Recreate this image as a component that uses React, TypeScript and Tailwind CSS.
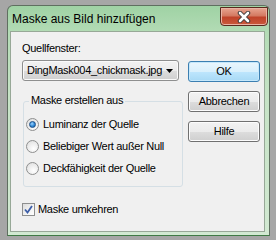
const font = { fontFamily: '"Liberation Sans", Arial, sans-serif' };

const Btn = ({ label, primary }: { label: string; primary?: boolean }) => (
  <div
    className={`h-[21px] w-[72px] rounded-[3px] border flex items-center justify-center text-[11px] text-black ${
      primary
        ? "border-[#3c7fb1] bg-[linear-gradient(#eaf6fd_0%,#d9f0fc_50%,#bee6fd_51%,#a7d9f5_100%)] shadow-[inset_0_0_0_1px_#c6e8fb]"
        : "border-[#707070] bg-[linear-gradient(#f2f2f2_0%,#ebebeb_50%,#dddddd_51%,#cfcfcf_100%)] shadow-[inset_0_0_0_1px_#fcfcfc]"
    }`}
  >
    {label}
  </div>
);

const Radio = ({ label, checked }: { label: string; checked?: boolean }) => (
  <div className="flex h-[22px] items-center">
    <div className="flex size-[13px] items-center justify-center rounded-full border border-[#8e8f8f] bg-[radial-gradient(circle_at_60%_70%,#ffffff_0%,#e6e6e6_70%,#cfcfcf_100%)]">
      {checked && (
        <div className="size-[7px] rounded-full border border-[#1b4e86] bg-[radial-gradient(circle_at_40%_35%,#9fd4ff_0%,#2e88d6_55%,#1a5ea3_100%)]" />
      )}
    </div>
    <span className="ml-[4px]">{label}</span>
  </div>
);

export default function App() {
  return (
    <div
      className="h-[240px] w-[276px] overflow-hidden bg-[#a6a6a6] pl-[7px] pt-[5px]"
      style={font}
    >
      <div className="flex h-[231px] w-[263px] flex-col rounded-t-[6px] border border-[#5f6f60] border-b-[#3f7a45] bg-[linear-gradient(#9fd2a4_0%,#b4dcb6_12%,#c6e3c6_40%,#d2e9d2_100%)] pb-[3px] pl-[2px] pr-[4px]">
        {/* Title bar */}
        <div className="flex h-[25px] items-start justify-between">
          <span className="mt-[6px] pl-[2px] text-[12px] leading-[14px] text-black">
            Maske aus Bild hinzufügen
          </span>
          <div className="-mr-[3px] mt-[1px] flex h-[19px] w-[48px] items-center justify-center rounded-b-[4px] border border-[#5a2a1f] bg-[linear-gradient(#e8a591_0%,#d47a62_45%,#c0432a_55%,#c95a3c_100%)] shadow-[inset_0_0_0_1px_#eab3a4]">
            <svg width="14" height="12" viewBox="0 0 14 12">
              <path d="M3 2 L11 10 M11 2 L3 10" stroke="#3a3a3a" strokeWidth="4.5" strokeLinecap="round" />
              <path d="M3 2 L11 10 M11 2 L3 10" stroke="#ffffff" strokeWidth="2.6" strokeLinecap="round" />
            </svg>
          </div>
        </div>

        {/* Client area */}
        <div className="flex flex-1 border border-[#97a897] bg-[#f0f0f0] pl-[11px] pt-[10px] text-[11px] tracking-[-0.3px] text-black">
          <div className="flex w-[161px] shrink-0 flex-col">
            <span className="leading-[13px]">Quellfenster:</span>
            <div className="mt-[5px] flex h-[21px] w-[157px] items-center justify-between rounded-[3px] border border-[#8e8f8f] bg-[linear-gradient(#f2f2f2_0%,#ebebeb_50%,#dddddd_51%,#cfcfcf_100%)] pl-[4px] pr-[5px] shadow-[inset_0_0_0_1px_#fafafa]">
              <span className="whitespace-nowrap">DingMask004_chickmask.jpg</span>
              <svg width="7" height="4" viewBox="0 0 7 4" className="shrink-0">
                <path d="M0 0 H7 L3.5 4 Z" fill="#000" />
              </svg>
            </div>

            <div className="relative ml-[1px] mt-[20px] h-[86px] w-[160px] rounded-[3px] border border-[#d5dfe5] pl-[2px] pt-[11px]">
              <span className="absolute -top-[8px] left-[5px] bg-[#f0f0f0] px-[2px] leading-[13px]">
                Maske erstellen aus
              </span>
              <Radio label="Luminanz der Quelle" checked />
              <Radio label="Beliebiger Wert außer Null" />
              <Radio label="Deckfähigkeit der Quelle" />
            </div>

            <div className="mt-[14px] flex items-center">
              <div className="flex size-[13px] items-center justify-center border border-[#8e8f8f] bg-[linear-gradient(135deg,#dcdcdc_0%,#f4f4f4_60%,#ffffff_100%)]">
                <svg width="9" height="9" viewBox="0 0 9 9">
                  <path d="M1 4.5 L3.5 7.5 L8 1" stroke="#3d5ea8" strokeWidth="1.8" fill="none" />
                </svg>
              </div>
              <span className="ml-[3px]">Maske umkehren</span>
            </div>
          </div>

          <div className="ml-[5px] flex flex-col gap-[9px] pt-[19px]">
            <Btn label="OK" primary />
            <Btn label="Abbrechen" />
            <Btn label="Hilfe" />
          </div>
        </div>
      </div>
    </div>
  );
}
